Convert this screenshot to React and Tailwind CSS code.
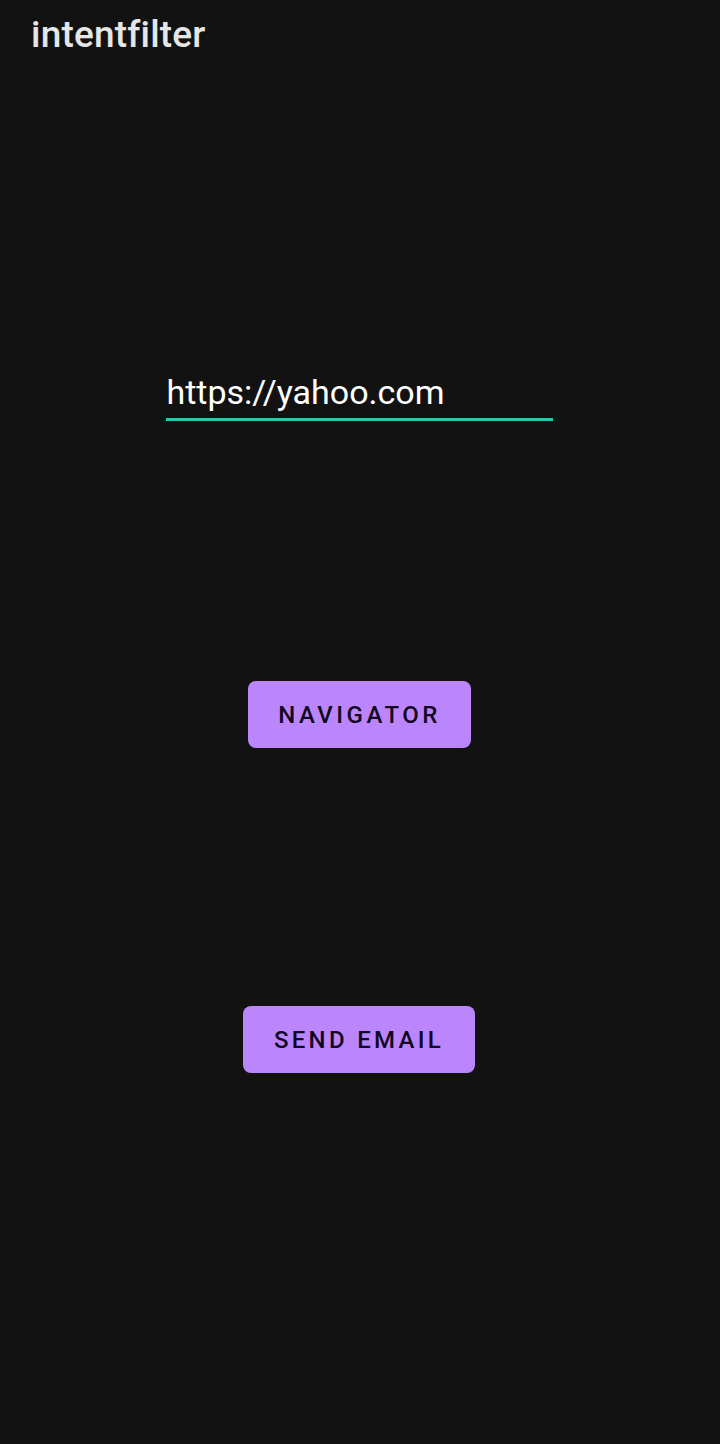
const App = () => {
    return (
        <div className="min-h-[1444px] w-[720px] bg-[#121212] text-[#e1e1e1]" style={{ fontFamily: 'Roboto, "Noto Sans", sans-serif' }}>
            {/* App bar title */}
            <div className="pl-[31px] pt-[13px] h-[60px]">
                <h1 className="text-[37px] leading-[44px] font-medium text-[#e6e6e6] tracking-[0.2px]">intentfilter</h1>
            </div>

            <div className="flex flex-col items-center">
                {/* URL field */}
                <div className="mt-[312px] w-[387px] ml-[-2px]">
                    <div className="pl-[1px] text-[34px] leading-[40px] text-white">https://yahoo.com</div>
                    <div className="mt-[6px] h-[3px] bg-[#2ec4a9]" />
                </div>

                {/* Navigator */}
                <button className="mt-[260px] w-[223px] h-[67px] rounded-[8px] bg-[#bb86fc] text-[#12071f] text-[24px] font-medium tracking-[3.5px] ml-[-1px]">
                    NAVIGATOR
                </button>

                {/* Send email */}
                <button className="mt-[258px] w-[232px] h-[67px] rounded-[8px] bg-[#bb86fc] text-[#12071f] text-[24px] font-medium tracking-[3.3px] ml-[-2px]">
                    SEND EMAIL
                </button>
            </div>
        </div>
    );
};

export default App;
